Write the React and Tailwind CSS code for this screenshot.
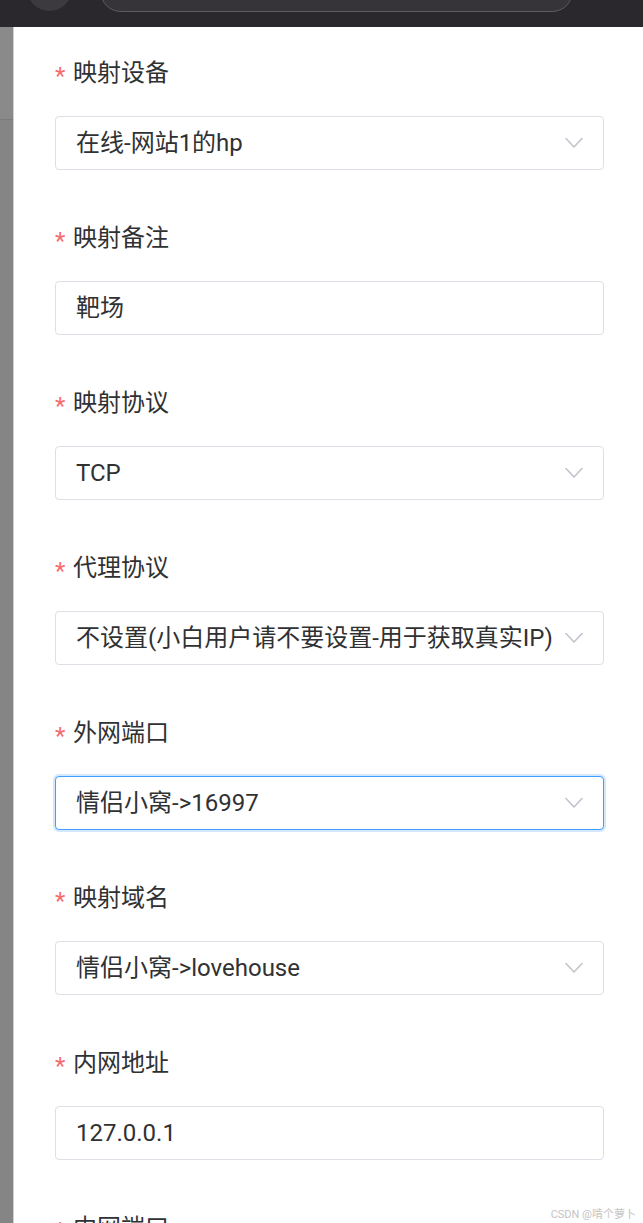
import React from "react";

const Chevron = () => (
  <svg width="18" height="12" viewBox="0 0 18 12" fill="none" className="shrink-0">
    <path d="M1 1.5 L9 10 L17 1.5" stroke="#c0c4cc" strokeWidth="1.6" strokeLinecap="round" strokeLinejoin="round" />
  </svg>
);

const fields = [
  { label: "映射设备", value: "在线-网站1的hp", select: true },
  { label: "映射备注", value: "靶场", select: false },
  { label: "映射协议", value: "TCP", select: true },
  { label: "代理协议", value: "不设置(小白用户请不要设置-用于获取真实IP)", select: true },
  { label: "外网端口", value: "情侣小窝->16997", select: true, focus: true },
  { label: "映射域名", value: "情侣小窝->lovehouse", select: true },
  { label: "内网地址", value: "127.0.0.1", select: false },
  { label: "内网端口", value: "", select: false },
];

export default function App() {
  return (
    <div
      className="relative w-[643px] h-[1223px] overflow-hidden bg-white flex flex-col"
      style={{ fontFamily: 'Roboto, "Noto Sans CJK SC", sans-serif' }}
    >
      <div className="relative h-[27px] shrink-0 bg-[#2a282c] overflow-hidden">
        <div className="absolute left-[27px] top-[-34px] w-[45px] h-[45px] rounded-full bg-[#3c3a3e]" />
        <div className="absolute left-[100px] top-[-30px] w-[473px] h-[42px] rounded-full bg-[#363438] border border-[#5d5b60]" />
      </div>
      <div className="flex flex-1 min-h-0">
        <div className="w-[13px] shrink-0 bg-[#858585] flex flex-col">
          <div className="h-[93px] bg-[#8a8a8a] border-b border-[#7a7a7a]" />
        </div>
        <div className="flex-1 border-l border-[#d0d0d0] pl-[41px] pr-[39px] pt-[31px]">
          {fields.map((f, i) => (
            <div key={i} className="mb-[53px]">
              <div className="h-[30px] flex items-center text-[24px] text-[#303133] leading-none">
                <span className="text-[#f56c6c] text-[24px] w-[18px] mt-[6px]">*</span>
                <span>{f.label}</span>
              </div>
              <div
                className={
                  "mt-[28px] h-[54px] rounded-[4px] bg-white flex items-center pl-[20px] pr-[20px] " +
                  (f.focus
                    ? "border border-[#409eff] ring-2 ring-[#d4e8fd]"
                    : "border border-[#dcdfe6]")
                }
              >
                <span className="flex-1 text-[24px] text-[#303133] whitespace-nowrap overflow-hidden">{f.value}</span>
                {f.select && <Chevron />}
              </div>
            </div>
          ))}
        </div>
      </div>
      <div className="absolute right-[7px] bottom-[3px] text-[11px] text-[#c4c4c4] leading-none" style={{ textShadow: "0 0 1px #ffffff" }}>
        CSDN @啃个萝卜
      </div>
    </div>
  );
}
